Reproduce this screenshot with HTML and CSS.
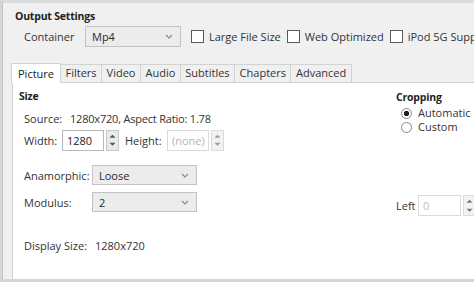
FILE: index.html
```html
<!DOCTYPE html>
<html lang="en">
<head>
    <meta charset="UTF-8">
    <title>Output Settings</title>
    <link rel="stylesheet" href="styles.css">
</head>
<body>

<div class="ventana">
    <div class="salida">
        <div class="titulo-grupo">Output Settings</div>
        <div class="fila-contenedor">
            <span class="etiqueta-contenedor">Container</span>
            <div class="combo combo-contenedor">
                <span>Mp4</span>
                <svg class="flecha" width="8" height="5" viewBox="0 0 8 5"><path d="M1 1 L4 4 L7 1" fill="none" stroke="#888" stroke-width="1.2"/></svg>
            </div>
            <label class="casilla"><span class="caja"></span>Large File Size</label>
            <label class="casilla"><span class="caja"></span>Web Optimized</label>
            <label class="casilla"><span class="caja"></span>iPod 5G Support</label>
        </div>
    </div>

    <div class="pestanas">
        <div class="pestana activa">Picture</div>
        <div class="pestana">Filters</div>
        <div class="pestana">Video</div>
        <div class="pestana">Audio</div>
        <div class="pestana">Subtitles</div>
        <div class="pestana">Chapters</div>
        <div class="pestana">Advanced</div>
    </div>

    <div class="panel">
        <div class="col-tamano">
            <div class="titulo-seccion">Size</div>
            <div class="fila fila-fuente">
                <span class="etq etq-fuente">Source:</span>
                <span class="valor-fuente">1280x720, Aspect Ratio: 1.78</span>
            </div>
            <div class="fila fila-ancho">
                <span class="etq etq-ancho">Width:</span>
                <div class="numero">
                    <div class="campo">1280</div>
                    <div class="giro">
                        <svg width="11" height="8" viewBox="0 0 11 8"><path d="M2.5 6 L5.5 3 L8.5 6 Z" fill="#555"/></svg>
                        <svg width="11" height="8" viewBox="0 0 11 8"><path d="M2.5 2 L5.5 5 L8.5 2 Z" fill="#555"/></svg>
                    </div>
                </div>
                <span class="etq etq-alto">Height:</span>
                <div class="numero deshabilitado">
                    <div class="campo">(none)</div>
                    <div class="giro">
                        <svg width="11" height="8" viewBox="0 0 11 8"><path d="M2.5 6 L5.5 3 L8.5 6 Z" fill="#999"/></svg>
                        <svg width="11" height="8" viewBox="0 0 11 8"><path d="M2.5 2 L5.5 5 L8.5 2 Z" fill="#999"/></svg>
                    </div>
                </div>
            </div>
            <div class="fila fila-anamorfico">
                <span class="etq etq-larga">Anamorphic:</span>
                <div class="combo combo-ancho">
                    <span>Loose</span>
                    <svg class="flecha" width="8" height="5" viewBox="0 0 8 5"><path d="M1 1 L4 4 L7 1" fill="none" stroke="#888" stroke-width="1.2"/></svg>
                </div>
            </div>
            <div class="fila fila-modulo">
                <span class="etq etq-larga">Modulus:</span>
                <div class="combo combo-ancho">
                    <span>2</span>
                    <svg class="flecha" width="8" height="5" viewBox="0 0 8 5"><path d="M1 1 L4 4 L7 1" fill="none" stroke="#888" stroke-width="1.2"/></svg>
                </div>
            </div>
            <div class="fila fila-pantalla">
                <span class="etq etq-pantalla">Display Size:</span>
                <span>1280x720</span>
            </div>
        </div>

        <div class="col-recorte">
            <div class="titulo-seccion">Cropping</div>
            <div class="opciones">
                <label class="radio"><span class="circulo marcado"></span>Automatic</label>
                <label class="radio"><span class="circulo"></span>Custom</label>
            </div>
            <div class="fila fila-izquierda">
                <span class="etq etq-izq">Left</span>
                <div class="numero deshabilitado">
                    <div class="campo campo-izq">0</div>
                    <div class="giro">
                        <svg width="11" height="8" viewBox="0 0 11 8"><path d="M2.5 6 L5.5 3 L8.5 6 Z" fill="#777"/></svg>
                        <svg width="11" height="8" viewBox="0 0 11 8"><path d="M2.5 2 L5.5 5 L8.5 2 Z" fill="#777"/></svg>
                    </div>
                </div>
            </div>
        </div>
    </div>
</div>

</body>
</html>
```

FILE: styles.css
```css
/* Ventana de ajustes de salida */
body {
    margin: 0;
    width: 474px;
    height: 282px;
    overflow: hidden;
    background-color: #d6d6d6;
    font-family: "Open Sans", "Noto Sans", sans-serif;
    font-size: 11px;
    color: #333;
}

.ventana {
    height: 276px;
    margin-left: 2px;
    border-top: 3px solid #dcdcdc;
    border-left: 1px solid #c4c4c4;
    background-color: #f0f0f0;
    overflow: hidden;
}

.salida {
    padding-left: 12px;
}

.titulo-grupo {
    margin-top: 5px;
    height: 16px;
    line-height: 16px;
    font-weight: bold;
    font-size: 10.5px;
    letter-spacing: -0.2px;
    color: #222;
}

.fila-contenedor {
    display: flex;
    align-items: center;
    margin-top: 2px;
    height: 21px;
    white-space: nowrap;
}

.fila-contenedor > * {
    flex: none;
}

.etiqueta-contenedor {
    margin-left: 9px;
    width: 61px;
}

/* Cajas desplegables */
.combo {
    display: flex;
    align-items: center;
    justify-content: space-between;
    box-sizing: border-box;
    height: 21px;
    padding: 0 7px 0 6px;
    border: 1px solid #c3c3c3;
    background-color: #ececec;
    color: #2a2a2a;
}

.combo-contenedor {
    width: 96px;
    margin-right: 10px;
}

.combo-ancho {
    width: 105px;
    height: 20px;
}

.casilla {
    display: flex;
    align-items: center;
    margin-right: 6px;
}

.caja {
    width: 11px;
    height: 11px;
    margin-right: 5px;
    border: 1px solid #5a5a5a;
    background-color: #fff;
}

/* Pestañas */
.pestanas {
    display: flex;
    align-items: flex-end;
    height: 19px;
    margin-top: 16px;
    padding-left: 9px;
}

.pestana {
    box-sizing: border-box;
    height: 18px;
    line-height: 16px;
    padding: 0 4.5px;
    margin-left: -1px;
    border: 1px solid #d2d2d2;
    border-bottom: none;
    background-color: #f0f0f0;
    color: #333;
}

.pestana.activa {
    position: relative;
    z-index: 1;
    height: 20px;
    line-height: 19px;
    margin-bottom: -1px;
    padding: 0 6px;
    background-color: #fff;
    color: #222;
}

.panel {
    display: flex;
    height: 200px;
    margin-left: 9px;
    border: 1px solid #d2d2d2;
    border-right: none;
    background-color: #fff;
}

.titulo-seccion {
    height: 16px;
    line-height: 16px;
    font-weight: bold;
    font-size: 10.5px;
    letter-spacing: -0.2px;
    color: #222;
}

.col-tamano {
    flex: none;
    width: 377px;
    padding: 5px 0 0 6px;
}

.fila {
    display: flex;
    align-items: center;
    white-space: nowrap;
}

.fila > * {
    flex: none;
}

.fila-fuente {
    margin-top: 6px;
    padding-left: 5px;
    height: 16px;
}

.etq-fuente {
    width: 46px;
}

.valor-fuente {
    letter-spacing: -0.2px;
}

.fila-ancho {
    margin-top: 3px;
    padding-left: 5px;
    height: 22px;
}

.etq-ancho {
    width: 38px;
}

.etq-alto {
    margin-left: 6px;
    width: 42px;
}

/* Campos numéricos con flechas */
.numero {
    display: flex;
    align-items: center;
}

.campo {
    box-sizing: border-box;
    width: 42px;
    height: 21px;
    line-height: 19px;
    padding-left: 4px;
    border: 1px solid #b9b9b9;
    background-color: #fff;
    color: #222;
}

.giro {
    display: flex;
    flex-direction: column;
    margin-left: 2px;
    box-sizing: border-box;
    width: 13px;
    height: 21px;
    border: 1px solid #c8c8c8;
    background-color: #eaeaea;
}

.giro svg {
    display: block;
    width: 11px;
    height: 9.5px;
}

.deshabilitado .campo {
    border-color: #dadada;
    color: #b5b5b5;
}

.deshabilitado .giro {
    border-color: #dcdcdc;
    background-color: #f2f2f2;
}

.fila-anamorfico {
    margin-top: 14px;
    padding-left: 5px;
}

.etq-larga {
    width: 68px;
}

.fila-modulo {
    margin-top: 7px;
    padding-left: 5px;
}

.fila-pantalla {
    margin-top: 25px;
    padding-left: 5px;
    height: 16px;
}

.etq-pantalla {
    width: 71px;
}

/* Columna de recorte */
.col-recorte {
    flex: none;
    padding-top: 6px;
}

.opciones {
    margin-top: 1px;
    padding-left: 5px;
}

.radio {
    display: flex;
    align-items: center;
    height: 14px;
    line-height: 14px;
    color: #333;
}

.circulo {
    box-sizing: border-box;
    width: 11px;
    height: 11px;
    margin-right: 6px;
    border: 1px solid #888;
    border-radius: 50%;
    background-color: #fff;
}

.circulo.marcado {
    background: radial-gradient(circle, #222 0 2.5px, #fff 3px);
}

.fila-izquierda {
    margin-top: 61px;
}

.etq-izq {
    width: 22px;
    color: #333;
}

.campo-izq {
    width: 43px;
}

.deshabilitado .campo-izq {
    color: #c0c0c0;
}
```
